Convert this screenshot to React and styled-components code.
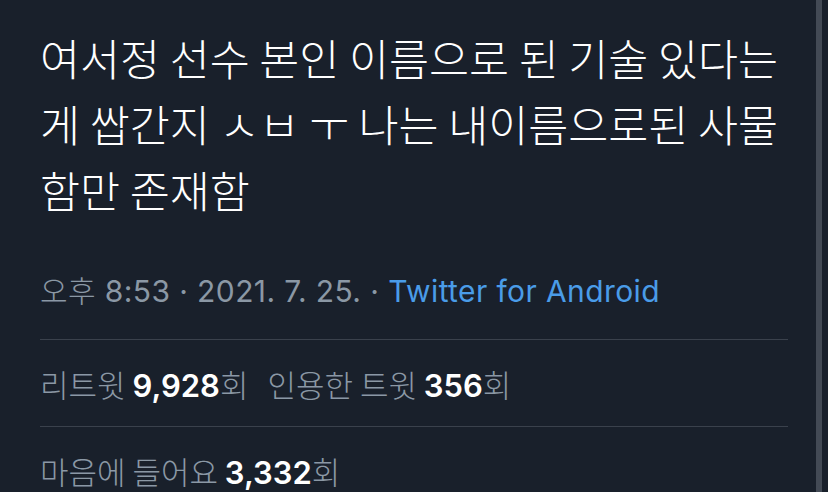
import React from 'react';
import styled, { createGlobalStyle } from 'styled-components';

const GlobalStyle = createGlobalStyle`
  html, body {
    margin: 0;
    padding: 0;
    background: #19202b;
  }
  body {
    font-family: 'Inter', 'Noto Sans CJK KR', sans-serif;
  }
`;

const Screen = styled.div`
  display: flex;
  width: 828px;
  height: 492px;
  overflow: hidden;
  background: #19202b;
`;

const Content = styled.main`
  flex: 1;
  padding: 0 28px 0 40px;
`;

const ScrollBar = styled.div`
  width: 6px;
  margin-right: 6px;
  background: #434a55;
`;

const TweetText = styled.p`
  margin: 25px 0 0;
  font-family: 'Noto Sans CJK KR', sans-serif;
  font-weight: 300;
  font-size: 43.5px;
  line-height: 66px;
  color: #ffffff;
  word-break: keep-all;
`;

const MetaRow = styled.div`
  margin-top: 48px;
  padding-bottom: 30px;
  font-size: 30px;
  line-height: 36px;
  letter-spacing: 0.4px;
  color: #8b98a5;
  border-bottom: 1px solid #3a414c;
`;

const Source = styled.span`
  color: #4a9ce8;
`;

const StatRow = styled.div`
  display: flex;
  align-items: center;
  gap: ${(p) => p.$gap || 0}px;
  height: 86px;
  font-size: 31px;
  color: #8b98a5;
  border-bottom: ${(p) => (p.$last ? 'none' : '1px solid #3a414c')};
`;

const Stat = styled.span`
  white-space: pre;
`;

const Count = styled.b`
  font-weight: 600;
  color: #ffffff;
`;

const Label = styled.span`
  font-family: 'Noto Sans CJK KR', sans-serif;
  font-weight: 300;
`;

const App = () => {
  return (
    <Screen>
      <GlobalStyle />
      <Content>
        <TweetText>
          여서정 선수 본인 이름으로 된 기술 있다는 게 쌉간지 ㅅㅂ ㅜ 나는 내이름으로된 사물 함만 존재함
        </TweetText>

        <MetaRow>
          <Label>오후</Label> 8:53 · 2021. 7. 25. · <Source>Twitter for Android</Source>
        </MetaRow>

        <StatRow $gap={19}>
          <Stat>
            <Label>리트윗 </Label>
            <Count>9,928</Count>
            <Label>회</Label>
          </Stat>
          <Stat>
            <Label>인용한 트윗 </Label>
            <Count>356</Count>
            <Label>회</Label>
          </Stat>
        </StatRow>

        <StatRow $last>
          <Stat>
            <Label>마음에 들어요 </Label>
            <Count>3,332</Count>
            <Label>회</Label>
          </Stat>
        </StatRow>
      </Content>
      <ScrollBar />
    </Screen>
  );
};

export default App;
